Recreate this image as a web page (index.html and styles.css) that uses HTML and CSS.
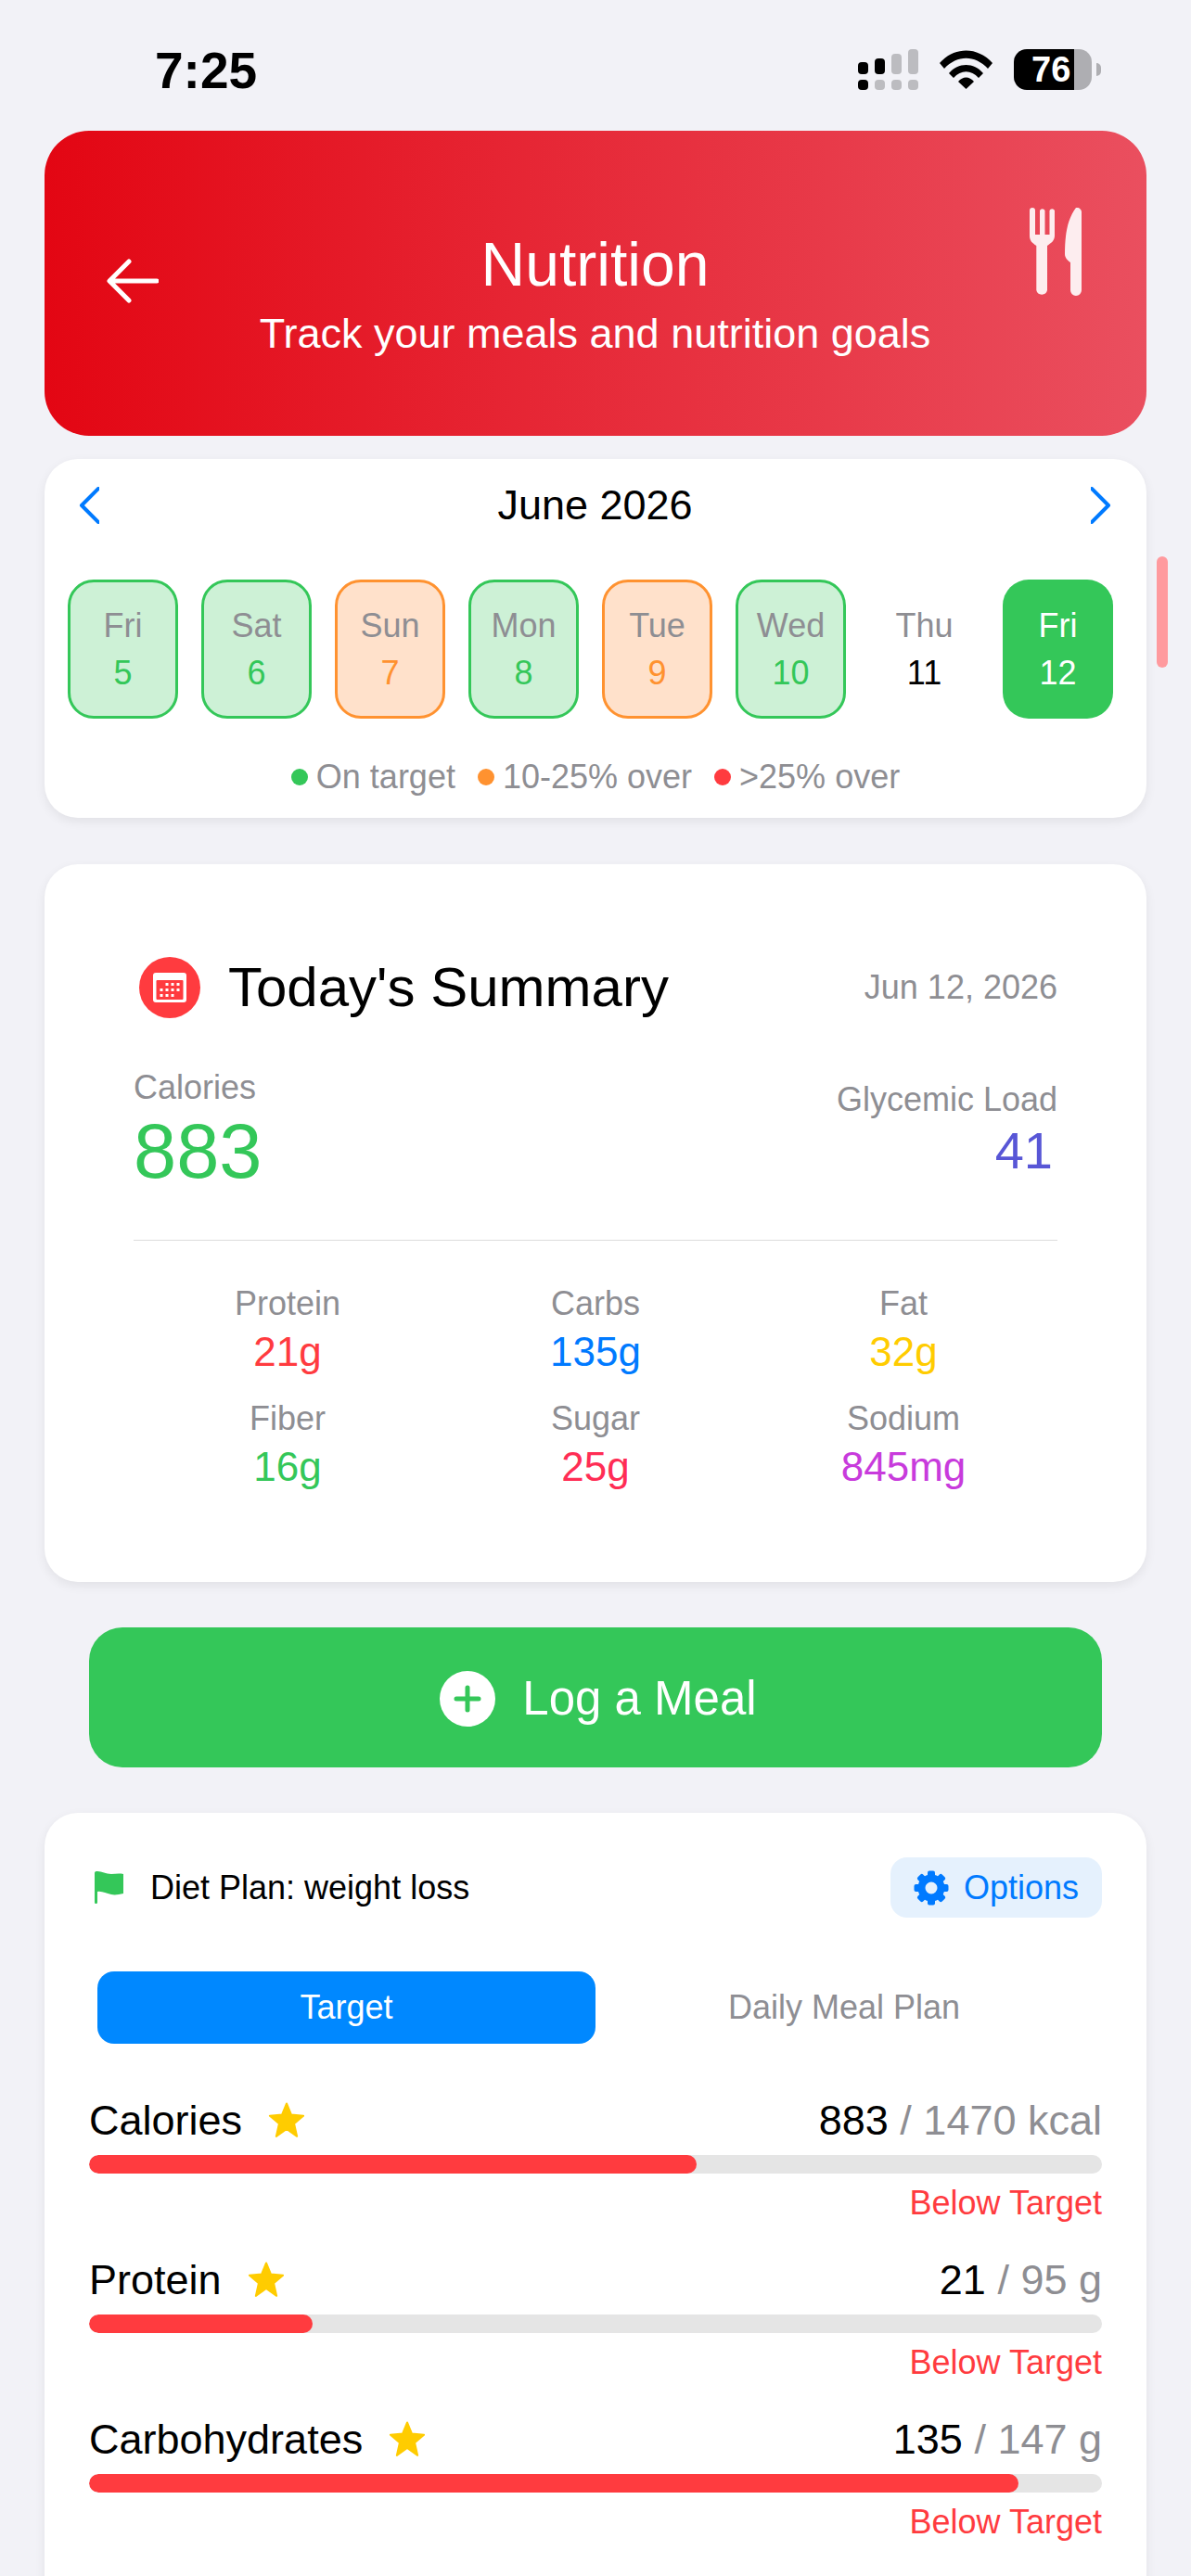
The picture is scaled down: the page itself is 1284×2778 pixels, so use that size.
FILE: index.html
```html
<!DOCTYPE html>
<html>
  <head>
    <title>Nutrition</title>
    <link rel="stylesheet" href="styles.css">
  </head>
  <body>
    <div class="status-bar">
      <span class="time">7:25</span>
      <div class="status-icons">
        <svg class="signal" width="65" height="44" viewBox="0 0 65 44">
          <rect x="0" y="14" width="11" height="13" rx="4" fill="#000"/>
          <rect x="18" y="10" width="11" height="17" rx="4" fill="#000"/>
          <rect x="36" y="5" width="11" height="22" rx="4" fill="#bcbcc0"/>
          <rect x="54" y="0" width="11" height="27" rx="4" fill="#bcbcc0"/>
          <rect x="0" y="33" width="11" height="11" rx="4" fill="#000"/>
          <rect x="18" y="33" width="11" height="11" rx="4" fill="#bcbcc0"/>
          <rect x="36" y="33" width="11" height="11" rx="4" fill="#bcbcc0"/>
          <rect x="54" y="33" width="11" height="11" rx="4" fill="#bcbcc0"/>
        </svg>
        <svg class="wifi" width="57" height="42" viewBox="0 0 57 42">
          <path d="M0 14 C16 -4 41 -4 57 14 L52 20 C38 5 19 5 5 20 Z" fill="#000"/>
          <path d="M10 25 C20 13 37 13 47 25 L42 30 C34 21 23 21 15 30 Z" fill="#000"/>
          <path d="M20 34 C25 28 32 28 37 34 L28.500 42 Z" fill="#000"/>
        </svg>
        <div class="battery">
          <div class="battery-body"><span>76</span></div>
          <div class="battery-nub"></div>
        </div>
      </div>
    </div>

    <div class="page">
      <div class="hero">
        <svg class="back-arrow" width="56" height="48" viewBox="0 0 56 48">
          <path d="M54 24 H4 M24 3 L3 24 L24 45" fill="none" stroke="#fff" stroke-width="5" stroke-linecap="round" stroke-linejoin="round"/>
        </svg>
        <div class="hero-text">
          <h1>Nutrition</h1>
          <p>Track your meals and nutrition goals</p>
        </div>
        <svg class="cutlery" width="56" height="95" viewBox="0 0 56 95">
          <path d="M0 3 A3 3 0 0 1 6 3 V29 H11 V3 A3 3 0 0 1 16.500 3 V29 H21.500 V3 A3 3 0 0 1 27 3 V30 C27 36 23 38 19 41 V89 A6 6 0 0 1 7.300 89 V41 C3 38 0 36 0 30 Z" fill="#fff" fill-opacity=".9"/>
          <path d="M50 0 A5 5 0 0 1 56 4 V89 A6 6 0 0 1 44 89 V59 C41 57 38 54 38 50 C38 28 41 12 50 0 Z" fill="#fff" fill-opacity=".9"/>
        </svg>
      </div>

      <div class="card calendar">
        <div class="month-row">
          <svg width="22" height="40" viewBox="0 0 22 40"><path d="M21 2 L3 20 L21 38" fill="none" stroke="#007aff" stroke-width="4" stroke-linecap="round" stroke-linejoin="round"/></svg>
          <span class="month">June 2026</span>
          <svg width="22" height="40" viewBox="0 0 22 40"><path d="M1 2 L19 20 L1 38" fill="none" stroke="#007aff" stroke-width="4" stroke-linecap="round" stroke-linejoin="round"/></svg>
        </div>
        <div class="days">
          <div class="day good"><span>Fri</span><b>5</b></div>
          <div class="day good"><span>Sat</span><b>6</b></div>
          <div class="day warn"><span>Sun</span><b>7</b></div>
          <div class="day good"><span>Mon</span><b>8</b></div>
          <div class="day warn"><span>Tue</span><b>9</b></div>
          <div class="day good"><span>Wed</span><b>10</b></div>
          <div class="day"><span>Thu</span><b>11</b></div>
          <div class="day selected"><span>Fri</span><b>12</b></div>
        </div>
        <div class="legend">
          <span class="legend-item"><i class="dot dot-green"></i>On target</span>
          <span class="legend-item"><i class="dot dot-orange"></i>10-25% over</span>
          <span class="legend-item"><i class="dot dot-red"></i>&gt;25% over</span>
        </div>
      </div>

      <div class="card summary">
        <div class="summary-head">
          <svg class="summary-icon" width="66" height="66" viewBox="0 0 66 66">
            <circle cx="33" cy="33" r="33" fill="#ff3b3f"/>
            <rect x="15" y="17" width="36" height="32" rx="3" fill="#fff"/>
            <rect x="18.500" y="25" width="29" height="21" rx="1" fill="#ff3b3f"/>
            <g fill="#fff">
              <rect x="28.500" y="28" width="3" height="3"/><rect x="34.500" y="28" width="3" height="3"/><rect x="40.500" y="28" width="3" height="3"/>
              <rect x="22.500" y="34" width="3" height="3"/><rect x="28.500" y="34" width="3" height="3"/><rect x="34.500" y="34" width="3" height="3"/><rect x="40.500" y="34" width="3" height="3"/>
              <rect x="22.500" y="40" width="3" height="3"/><rect x="28.500" y="40" width="3" height="3"/><rect x="34.500" y="40" width="3" height="3"/>
            </g>
          </svg>
          <h2>Today's Summary</h2>
          <span class="summary-date">Jun 12, 2026</span>
        </div>
        <div class="totals">
          <div>
            <div class="label">Calories</div>
            <div class="total-calories">883</div>
          </div>
          <div class="total-right">
            <div class="label">Glycemic Load</div>
            <div class="total-load">41</div>
          </div>
        </div>
        <div class="macros">
          <div class="macro"><div class="label">Protein</div><div class="macro-value c-red">21g</div></div>
          <div class="macro"><div class="label">Carbs</div><div class="macro-value c-blue">135g</div></div>
          <div class="macro"><div class="label">Fat</div><div class="macro-value c-yellow">32g</div></div>
          <div class="macro"><div class="label">Fiber</div><div class="macro-value c-green">16g</div></div>
          <div class="macro"><div class="label">Sugar</div><div class="macro-value c-pink">25g</div></div>
          <div class="macro"><div class="label">Sodium</div><div class="macro-value c-purple">845mg</div></div>
        </div>
      </div>

      <div class="log-button">
        <svg width="60" height="60" viewBox="0 0 60 60">
          <circle cx="30" cy="30" r="30" fill="#fff"/>
          <path d="M30 18 V42 M18 30 H42" stroke="#34c759" stroke-width="5" stroke-linecap="round"/>
        </svg>
        <span>Log a Meal</span>
      </div>

      <div class="card plan">
        <div class="plan-head">
          <div class="plan-title">
            <svg width="31" height="35" viewBox="0 0 31 35">
              <path d="M0 2 C0 .500 1 0 3 0 C8 0 12 3 18 3 C22 3 26 2 31 3 V24 C26 25 22 26 18 25 C12 24 8 21 3 22 V33.500 A1.500 1.500 0 0 1 0 33.500 Z" fill="#34c759"/>
            </svg>
            <span>Diet Plan: weight loss</span>
          </div>
          <div class="options">
            <svg width="38" height="38" viewBox="0 0 38 38">
              <circle cx="19" cy="19" r="10.500" fill="none" stroke="#007aff" stroke-width="8"/>
              <g fill="#007aff">
                <rect x="15" y="0.500" width="8" height="8" rx="2"/>
                <rect x="15" y="0.500" width="8" height="8" rx="2" transform="rotate(45 19 19)"/>
                <rect x="15" y="0.500" width="8" height="8" rx="2" transform="rotate(90 19 19)"/>
                <rect x="15" y="0.500" width="8" height="8" rx="2" transform="rotate(135 19 19)"/>
                <rect x="15" y="0.500" width="8" height="8" rx="2" transform="rotate(180 19 19)"/>
                <rect x="15" y="0.500" width="8" height="8" rx="2" transform="rotate(225 19 19)"/>
                <rect x="15" y="0.500" width="8" height="8" rx="2" transform="rotate(270 19 19)"/>
                <rect x="15" y="0.500" width="8" height="8" rx="2" transform="rotate(315 19 19)"/>
              </g>
            </svg>
            <span>Options</span>
          </div>
        </div>
        <div class="tabs">
          <div class="tab tab-active">Target</div>
          <div class="tab">Daily Meal Plan</div>
        </div>

        <div class="goal">
          <div class="goal-head">
            <span class="goal-name">Calories<svg class="star" width="42" height="40" viewBox="0 0 42 40"><path d="M21 1.500 L26 13.620 L39.070 14.630 L29.080 23.130 L32.170 36.870 L21 29 L9.830 36.870 L12.920 23.130 L2.930 14.630 L16 13.620 Z" fill="#ffcc00" stroke="#ffcc00" stroke-width="2" stroke-linejoin="round"/></svg></span>
            <span class="goal-amount"><b>883</b> / 1470 kcal</span>
          </div>
          <div class="bar"><div class="bar-fill" style="width: 60%"></div></div>
          <div class="goal-status">Below Target</div>
        </div>
        <div class="goal">
          <div class="goal-head">
            <span class="goal-name">Protein<svg class="star" width="42" height="40" viewBox="0 0 42 40"><path d="M21 1.500 L26 13.620 L39.070 14.630 L29.080 23.130 L32.170 36.870 L21 29 L9.830 36.870 L12.920 23.130 L2.930 14.630 L16 13.620 Z" fill="#ffcc00" stroke="#ffcc00" stroke-width="2" stroke-linejoin="round"/></svg></span>
            <span class="goal-amount"><b>21</b> / 95 g</span>
          </div>
          <div class="bar"><div class="bar-fill" style="width: 22.1%"></div></div>
          <div class="goal-status">Below Target</div>
        </div>
        <div class="goal">
          <div class="goal-head">
            <span class="goal-name">Carbohydrates<svg class="star" width="42" height="40" viewBox="0 0 42 40"><path d="M21 1.500 L26 13.620 L39.070 14.630 L29.080 23.130 L32.170 36.870 L21 29 L9.830 36.870 L12.920 23.130 L2.930 14.630 L16 13.620 Z" fill="#ffcc00" stroke="#ffcc00" stroke-width="2" stroke-linejoin="round"/></svg></span>
            <span class="goal-amount"><b>135</b> / 147 g</span>
          </div>
          <div class="bar"><div class="bar-fill" style="width: 91.8%"></div></div>
          <div class="goal-status">Below Target</div>
        </div>
      </div>
    </div>

    <div class="scroll-thumb"></div>
  </body>
</html>
```

FILE: styles.css
```css
html {
  height: 2778px;
  overflow: hidden;
}

body {
  font-family: "Liberation Sans", Arial, sans-serif;
  background-color: #f2f2f7;
  color: #000;
  margin: 0;
  padding: 0;
  height: 2778px;
  overflow: hidden;
  position: relative;
}

h1, h2, p {
  margin: 0;
  font-weight: normal;
}

/* status bar */
.status-bar {
  height: 141px;
  display: flex;
  justify-content: space-between;
  align-items: flex-start;
  padding: 53px 97px 0 167px;
  box-sizing: border-box;
}

.time {
  font-size: 55px;
  font-weight: bold;
  line-height: 46px;
}

.status-icons {
  display: flex;
  align-items: flex-start;
}

.signal {
  margin-right: 23px;
}

.wifi {
  margin-top: 1px;
  margin-right: 23px;
}

.battery {
  display: flex;
  align-items: center;
}

.battery-body {
  width: 84px;
  height: 44px;
  border-radius: 14px;
  background: linear-gradient(90deg, #000 77%, #aeaeb2 77%);
  color: #fff;
  font-size: 38px;
  font-weight: bold;
  line-height: 44px;
  padding-left: 19px;
  box-sizing: border-box;
}

.battery-nub {
  width: 5px;
  height: 14px;
  margin-left: 5px;
  background-color: #aeaeb2;
  border-radius: 0 7px 7px 0;
}

.page {
  padding: 0 48px;
}

/* red header */
.hero {
  height: 329px;
  border-radius: 48px;
  background: linear-gradient(90deg, #e30613, #ea4f5f);
  color: #fff;
  display: grid;
  grid-template-columns: 1fr auto 1fr;
  padding: 0 70px 0 67px;
  box-sizing: border-box;
}

.back-arrow {
  margin-top: 138px;
}

.hero-text {
  text-align: center;
  padding: 104px 0 0 2px;
}

.hero-text h1 {
  font-size: 66px;
  line-height: 80px;
}

.hero-text p {
  font-size: 45px;
  line-height: 54px;
  margin-top: 8px;
}

.cutlery {
  justify-self: end;
  margin-top: 83px;
}

.card {
  background-color: #fff;
  border-radius: 36px;
  box-shadow: 0 4px 12px rgba(0, 0, 0, 0.07);
}

/* calendar */
.calendar {
  margin-top: 25px;
  height: 387px;
  padding: 30px 36px 0 25px;
  box-sizing: border-box;
}

.month-row {
  display: flex;
  justify-content: space-between;
  align-items: center;
  padding: 0 2px 0 12px;
  height: 40px;
}

.month {
  font-size: 45px;
}

.days {
  display: flex;
  justify-content: space-between;
  margin-top: 60px;
}

.day {
  width: 119px;
  height: 150px;
  border-radius: 28px;
  box-sizing: border-box;
  border: 3px solid transparent;
  display: flex;
  flex-direction: column;
  align-items: center;
  justify-content: center;
  gap: 14px;
  font-size: 36px;
  line-height: 37px;
}

.day span {
  color: #8e8e93;
}

.day b {
  font-weight: normal;
}

.good {
  background-color: #cdf1d6;
  border-color: #34c759;
}

.good b {
  color: #34c759;
}

.warn {
  background-color: #ffe1cb;
  border-color: #ff9230;
}

.warn b {
  color: #ff9230;
}

.selected {
  background-color: #34c759;
}

.selected span,
.selected b {
  color: #fff;
}

.legend {
  display: flex;
  justify-content: center;
  gap: 24px;
  margin: 36px 0 0 11px;
  font-size: 36px;
  line-height: 54px;
  color: #8e8e93;
}

.legend-item {
  display: flex;
  align-items: center;
}

.dot {
  width: 18px;
  height: 18px;
  border-radius: 50%;
  margin-right: 9px;
}

.dot-green { background-color: #34c759; }
.dot-orange { background-color: #ff9230; }
.dot-red { background-color: #ff3b3f; }

/* today's summary */
.summary {
  margin-top: 50px;
  height: 774px;
  padding: 100px 96px 0 96px;
  box-sizing: border-box;
}

.summary-head {
  display: flex;
  align-items: center;
  padding-left: 6px;
}

.summary-head h2 {
  font-size: 60px;
  line-height: 66px;
  margin-left: 30px;
}

.summary-date {
  margin-left: auto;
  font-size: 36px;
  color: #8e8e93;
}

.label {
  font-size: 36px;
  line-height: 42px;
  color: #8e8e93;
}

.totals {
  display: flex;
  justify-content: space-between;
  margin-top: 54px;
  padding-bottom: 47px;
  border-bottom: 1px solid #ddd;
}

.total-calories {
  font-size: 83px;
  line-height: 96px;
  color: #34c759;
}

.total-right {
  text-align: right;
  padding-top: 13px;
}

.total-load {
  font-size: 56px;
  line-height: 68px;
  padding-right: 5px;
  color: #5856d6;
}

.macros {
  display: grid;
  grid-template-columns: repeat(3, 332px);
  justify-content: center;
  row-gap: 24px;
  margin-top: 47px;
  text-align: center;
}

.macro-value {
  font-size: 44px;
  line-height: 54px;
  margin-top: 4px;
}

.c-red { color: #ff3b3f; }
.c-blue { color: #007aff; }
.c-yellow { color: #ffcc00; }
.c-green { color: #34c759; }
.c-pink { color: #ff2d55; }
.c-purple { color: #c83bdc; }

/* log button */
.log-button {
  margin: 49px 48px 0;
  height: 151px;
  padding: 2px 0 0 6px;
  box-sizing: border-box;
  border-radius: 36px;
  background-color: #34c759;
  color: #fff;
  display: flex;
  align-items: center;
  justify-content: center;
  gap: 29px;
  font-size: 51px;
}

/* diet plan */
.plan {
  margin-top: 49px;
  padding: 48px 48px 60px;
  height: 900px;
  box-sizing: border-box;
}

.plan-head {
  display: flex;
  justify-content: space-between;
  align-items: center;
}

.plan-title {
  display: flex;
  align-items: center;
  gap: 29px;
  font-size: 36px;
  padding-left: 6px;
}

.options {
  width: 228px;
  height: 65px;
  border-radius: 18px;
  background-color: #e5f1fd;
  color: #007aff;
  font-size: 36px;
  display: flex;
  align-items: center;
  justify-content: center;
  gap: 16px;
}

.tabs {
  display: grid;
  grid-template-columns: 537px 1fr;
  margin: 58px 10px 0 9px;
}

.tab {
  height: 78px;
  line-height: 78px;
  border-radius: 18px;
  text-align: center;
  font-size: 36px;
  color: #8e8e93;
}

.tab-active {
  background-color: #0088ff;
  color: #fff;
}

.goal {
  margin-top: 37px;
}

.tabs + .goal {
  margin-top: 58px;
}

.goal-head {
  display: flex;
  justify-content: space-between;
  align-items: center;
  line-height: 50px;
}

.goal-name {
  font-size: 45px;
  display: flex;
  align-items: center;
}

.star {
  margin-left: 27px;
}

.goal-amount {
  font-size: 45px;
  color: #8e8e93;
}

.goal-amount b {
  font-weight: normal;
  color: #000;
}

.bar {
  height: 20px;
  border-radius: 10px;
  background-color: #e5e5e5;
  margin-top: 12px;
  overflow: hidden;
}

.bar-fill {
  height: 100%;
  border-radius: 10px;
  background-color: #ff3b3f;
}

.goal-status {
  text-align: right;
  font-size: 36px;
  line-height: 42px;
  color: #ff3b3f;
  margin-top: 11px;
}

.scroll-thumb {
  position: absolute;
  left: 1247px;
  top: 600px;
  width: 12px;
  height: 120px;
  border-radius: 6px;
  background-color: #ff9a9e;
}
```
